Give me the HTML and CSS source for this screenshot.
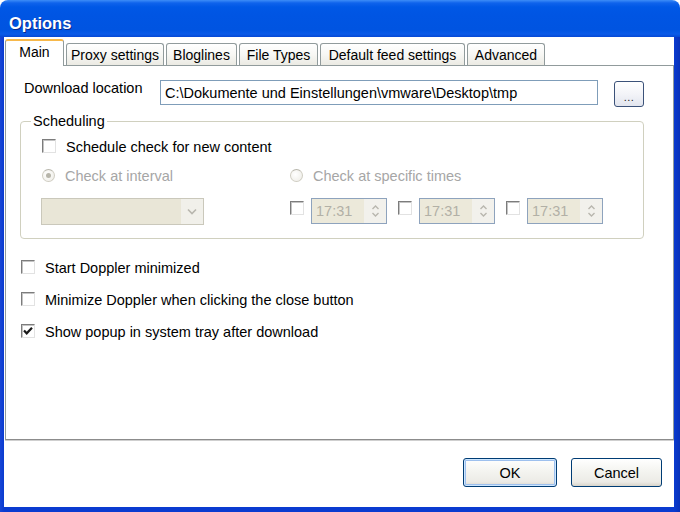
FILE: index.html
```html
<!DOCTYPE html>
<html>
<head>
<meta charset="utf-8">
<title>Options</title>
<link rel="stylesheet" href="styles.css">
</head>
<body>
<div class="window">
  <div class="titlebar"><span class="title">Options</span></div>
  <div class="frame">
    <div class="client">
      <div class="tabs">
        <div class="tab active w-main">Main</div>
        <div class="tab w-proxy">Proxy settings</div>
        <div class="tab w-blog">Bloglines</div>
        <div class="tab w-types">File Types</div>
        <div class="tab w-feed">Default feed settings</div>
        <div class="tab w-adv">Advanced</div>
      </div>
      <div class="panel">
        <div class="dl-row">
          <span class="dl-label">Download location</span>
          <div class="textbox">C:\Dokumente und Einstellungen\vmware\Desktop\tmp</div>
          <div class="btn browse"><span class="dots">...</span></div>
        </div>
        <fieldset class="group">
          <legend>Scheduling</legend>
          <div class="group-body">
            <div class="opt r1"><span class="cb"></span><span class="txt">Schedule check for new content</span></div>
            <div class="cols r2">
              <div class="opt disabled"><span class="radio checked"></span><span class="txt">Check at interval</span></div>
              <div class="opt disabled"><span class="radio"></span><span class="txt">Check at specific times</span></div>
            </div>
            <div class="cols r3">
              <div class="combo">
                <span class="combo-btn">
                  <svg width="10" height="7" viewBox="0 0 10 7"><path d="M1 1.5 L5 5.5 L9 1.5" fill="none" stroke="#b8b6ae" stroke-width="1.6"/></svg>
                </span>
              </div>
              <div class="times">
                <div class="time"><span class="cb tcb"></span><div class="spin"><span class="spin-val">17:31</span><span class="spin-btn"><svg width="9" height="14" viewBox="0 0 9 14"><path d="M1.5 5 L4.5 2 L7.5 5 M1.5 9 L4.5 12 L7.5 9" fill="none" stroke="#b8b6ae" stroke-width="1.4"/></svg></span></div></div>
                <div class="time"><span class="cb tcb"></span><div class="spin"><span class="spin-val">17:31</span><span class="spin-btn"><svg width="9" height="14" viewBox="0 0 9 14"><path d="M1.5 5 L4.5 2 L7.5 5 M1.5 9 L4.5 12 L7.5 9" fill="none" stroke="#b8b6ae" stroke-width="1.4"/></svg></span></div></div>
                <div class="time"><span class="cb tcb"></span><div class="spin"><span class="spin-val">17:31</span><span class="spin-btn"><svg width="9" height="14" viewBox="0 0 9 14"><path d="M1.5 5 L4.5 2 L7.5 5 M1.5 9 L4.5 12 L7.5 9" fill="none" stroke="#b8b6ae" stroke-width="1.4"/></svg></span></div></div>
              </div>
            </div>
          </div>
        </fieldset>
        <div class="options">
          <div class="opt"><span class="cb"></span><span class="txt">Start Doppler minimized</span></div>
          <div class="opt"><span class="cb"></span><span class="txt">Minimize Doppler when clicking the close button</span></div>
          <div class="opt"><span class="cb checked"><svg width="12" height="12" viewBox="0 0 12 12"><path d="M2 5.5 L4.7 8.3 L10 2.8" fill="none" stroke="#1a1a1a" stroke-width="2.2"/></svg></span><span class="txt">Show popup in system tray after download</span></div>
        </div>
      </div>
      <div class="footer">
        <div class="btn default w-ok">OK</div>
        <div class="btn w-cancel">Cancel</div>
      </div>
    </div>
  </div>
</div>
</body>
</html>
```
FILE: styles.css
```css
html, body {
  margin: 0;
  padding: 0;
  background: #ffffff;
}
body {
  width: 680px;
  height: 512px;
  overflow: hidden;
  font-family: "Liberation Sans", Arial, sans-serif;
  font-size: 14.5px;
  line-height: 16px;
  color: #000;
}
.window {
  width: 680px;
  height: 512px;
  display: flex;
  flex-direction: column;
}
.titlebar {
  height: 37px;
  box-sizing: border-box;
  border-radius: 8px 8px 0 0;
  background: linear-gradient(to bottom, #3d8df7 0px, #0f63ec 3px, #0058e6 7px, #0055e3 40%, #0054e1 80%, #0a5be8 92%, #0648d4 100%);
  display: flex;
  align-items: center;
  padding: 9px 0 0 9px;
}
.title {
  color: #fff;
  font-weight: bold;
  font-size: 16.5px;
  text-shadow: 1px 1px 0 #0a2a8c;
}
.frame {
  flex: 1;
  display: flex;
  background: linear-gradient(to right, #1846d6 0, #0a3bd0 4px, #0a3bd0 674px, #0831b8 680px);
  padding: 0 6px 5px 4px;
}
.client {
  flex: 1;
  background: #ffffff;
  display: flex;
  flex-direction: column;
  padding: 2px 0 0 1px;
}
.tabs {
  display: flex;
  align-items: flex-start;
  gap: 2px;
  height: 27px;
  font-size: 14px;
}
.tab {
  box-sizing: border-box;
  height: 22px;
  margin-top: 4px;
  border: 1px solid #919b9c;
  border-bottom: none;
  border-radius: 3px 3px 0 0;
  background: linear-gradient(to bottom, #ffffff 0%, #f7f7f4 50%, #ebeae3 100%);
  display: flex;
  align-items: center;
  justify-content: center;
  padding-top: 1px;
  white-space: nowrap;
}
.tab.active {
  height: 27px;
  margin-top: 0;
  background: #ffffff;
  border-top: 2px solid #f7b84a;
  position: relative;
  z-index: 1;
  padding-top: 0;
  padding-bottom: 3px;
}
.w-main { width: 59px; }
.w-proxy { width: 98px; }
.w-blog { width: 71px; }
.w-types { width: 79px; }
.w-feed { width: 145px; }
.w-adv { width: 78px; }

.panel {
  margin-top: -1px;
  width: 669px;
  height: 375px;
  box-sizing: border-box;
  border: 1px solid #919b9c;
  border-bottom-color: #8c8c8c;
  box-shadow: 0 1px 0 #cfcfcf;
  background: #fff;
  padding-top: 14px;
}
.dl-row {
  display: flex;
  align-items: flex-start;
  margin-left: 18px;
}
.dl-label {
  width: 136px;
  line-height: 16px;
}
.textbox {
  width: 438px;
  height: 25px;
  box-sizing: border-box;
  border: 1px solid #7f9db9;
  padding-left: 4px;
  line-height: 24px;
  white-space: nowrap;
  overflow: hidden;
}
.btn {
  box-sizing: border-box;
  border: 1px solid #003c74;
  border-radius: 3px;
  background: linear-gradient(to bottom, #ffffff 0%, #f4f4f0 45%, #ecebe6 85%, #d8d4ca 100%);
  display: flex;
  align-items: center;
  justify-content: center;
}
.browse {
  width: 30px;
  height: 26px;
  margin-left: 16px;
  margin-top: 1px;
  border-color: #3b5279;
  background: linear-gradient(to bottom, #ffffff 0%, #f3f4f8 50%, #e2e5ee 100%);
}
.dots {
  font-size: 11px;
  line-height: 11px;
  padding-top: 6px;
  letter-spacing: 0.5px;
  color: #222;
}
.group {
  margin: 6px 0 0 14px;
  width: 624px;
  box-sizing: border-box;
  min-width: 0;
  border: 1px solid #d0d0bf;
  border-radius: 4px;
  padding: 0;
}
.group legend {
  margin-left: 10px;
  padding: 0 2px;
  line-height: 16px;
}
.group-body {
  padding: 9px 0 13px 21px;
}
.opt {
  display: flex;
  align-items: center;
  height: 16px;
  white-space: nowrap;
}
.txt {
  padding-top: 1px;
}
.opt .cb {
  margin-right: 10px;
}
.cb {
  width: 14px;
  height: 14px;
  box-sizing: border-box;
  border: 1px solid;
  border-color: #7c7c7c #e2e2e2 #e2e2e2 #7c7c7c;
  box-shadow: inset 1px 1px 0 #c4c4c4;
  background: #fff;
  display: flex;
  align-items: center;
  justify-content: center;
  flex: none;
}
.disabled {
  color: #a6a6a6;
}
.radio {
  width: 13px;
  height: 13px;
  box-sizing: border-box;
  border-radius: 50%;
  border: 1px solid #cfcdc2;
  border-top-color: #b9b7ad;
  background: radial-gradient(circle at 40% 40%, #ffffff 0%, #f2f1ec 70%, #e6e4dc 100%);
  margin-right: 10px;
  display: flex;
  align-items: center;
  justify-content: center;
  flex: none;
}
.radio.checked::after {
  content: "";
  width: 5px;
  height: 5px;
  border-radius: 50%;
  background: #b7b5aa;
}
.cols {
  display: grid;
  grid-template-columns: 248px auto;
  align-items: start;
}
.r2 {
  margin-top: 13px;
}
.r3 {
  margin-top: 15px;
  height: 27px;
}
.combo {
  margin-left: -1px;
  width: 163px;
  height: 27px;
  box-sizing: border-box;
  border: 1px solid #cac8bb;
  background: #e9e6d7;
  display: flex;
  justify-content: flex-end;
}
.combo-btn {
  width: 22px;
  background: #f1f0ea;
  display: flex;
  align-items: center;
  justify-content: center;
}
.times {
  display: flex;
  gap: 11px;
}
.time {
  display: flex;
  align-items: flex-start;
}
.tcb {
  margin-top: 3px;
}
.spin {
  margin-left: 7px;
  width: 76px;
  height: 26px;
  box-sizing: border-box;
  border: 1px solid #8ea3bd;
  background: #ece9da;
  display: flex;
}
.spin-val {
  flex: 1;
  color: #b2b0a6;
  padding-left: 4px;
  line-height: 25px;
}
.spin-btn {
  width: 22px;
  background: #f2f1ec;
  display: flex;
  align-items: center;
  justify-content: center;
}
.options {
  margin: 20px 0 0 15px;
  display: flex;
  flex-direction: column;
  gap: 16px;
}
.footer {
  flex: 1;
  display: flex;
  justify-content: flex-end;
  align-items: flex-start;
  gap: 14px;
  padding: 18px 12px 0 0;
}
.w-ok { width: 94px; height: 29px; }
.w-cancel { width: 91px; height: 29px; }
.default {
  box-shadow: inset 0 0 0 1px #cee7ff, inset 0 0 0 2px #9ec0ee;
}
```
